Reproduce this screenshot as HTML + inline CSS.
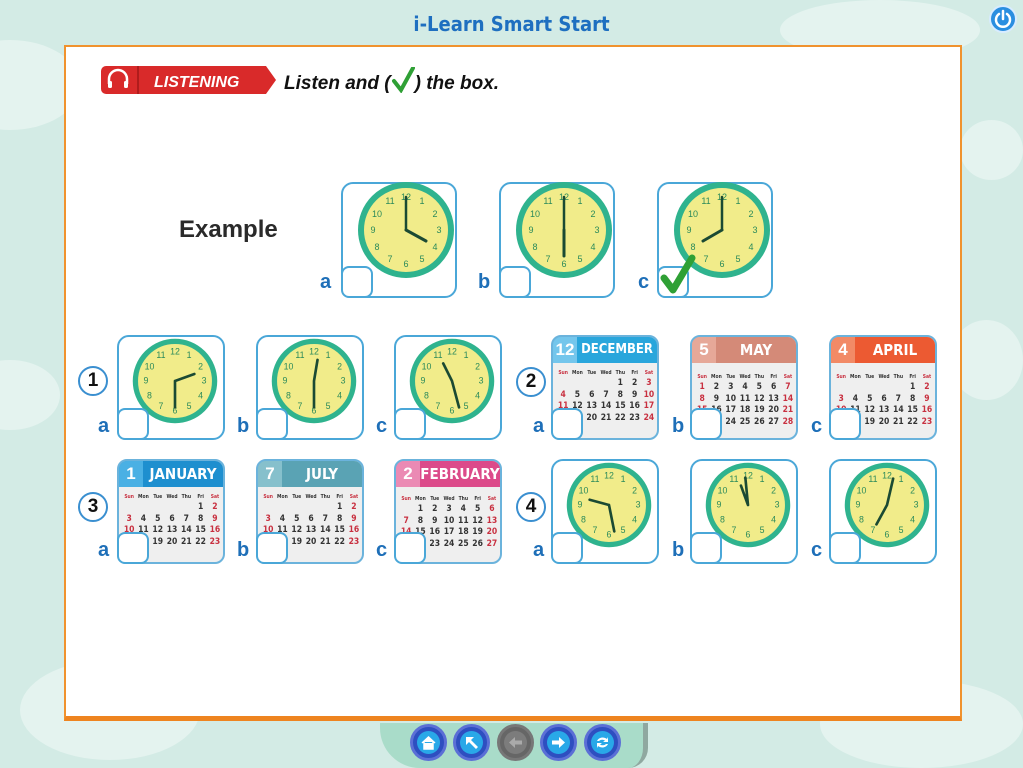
<!DOCTYPE html>
<html><head><meta charset="utf-8"><style>
*{margin:0;padding:0;box-sizing:border-box}
html,body{width:1023px;height:768px;overflow:hidden}
body{background:#d3ebe5;font-family:"Liberation Sans",sans-serif;position:relative}
.wrap{position:absolute;left:0;top:0;width:1023px;height:768px;overflow:hidden}
.cloud{position:absolute;background:#e4f3ef;border-radius:50%}
.title{position:absolute;top:12px;left:0;width:1023px;text-align:center;color:#1e6fc0;font-weight:bold;font-size:20px;font-family:"DejaVu Sans Condensed","Liberation Sans",sans-serif}
.power{position:absolute;left:989px;top:5px;width:28px;height:28px;border-radius:50%;background:#2a8ee0;border:2px solid #d8ecff}
.panel{position:absolute;left:64px;top:45px;width:898px;height:676px;background:#fff;border:2px solid #f0922e;border-bottom:5px solid #ee8420}
.box{position:absolute;border:2px solid #4aa7d8;border-radius:12px;background:#fff}
.cb{position:absolute;width:32px;height:32px;border:2px solid #4aa7d8;border-radius:8px;background:#fff}
.lab{position:absolute;font-weight:bold;color:#1e6fb8;font-size:20px}
.num{position:absolute;width:30px;height:30px;border:2px solid #3a8fd0;border-radius:50%;text-align:center;font-weight:bold;font-size:19px;line-height:26px;color:#111}
.cal{position:absolute;width:108px;height:105px;border:2px solid #6bb3dc;border-radius:10px;overflow:hidden;background:#efefef}
.ch{height:26px;display:flex;color:#fff;font-weight:bold;font-size:17px;line-height:26px;white-space:nowrap}
.ch b{width:24px;text-align:center;flex:none}
.ch span{flex:1;text-align:center;font-family:"DejaVu Sans Condensed","Liberation Sans",sans-serif;font-size:15px;overflow:hidden}
.cg{font-weight:bold;color:#333;padding:5px 3px 0;display:grid;grid-template-columns:repeat(7,14.3px);font-size:8.5px;line-height:11.5px;text-align:center;font-family:"DejaVu Sans Condensed","Liberation Sans",sans-serif}
.cg .h{font-size:5px;line-height:10px}
.cg .d{color:#c83040}
.nb{position:absolute;top:724px;width:37px;height:37px;border-radius:50%;background:#2e4fc0;border:3px solid #5b6fd6}
.nb i{position:absolute;left:4px;top:4px;width:23px;height:23px;border-radius:50%;background:#29a8e8}
</style></head><body><div class="wrap">
<div class="cloud" style="left:-60px;top:40px;width:140px;height:90px"></div>
<div class="cloud" style="left:-40px;top:360px;width:100px;height:70px"></div>
<div class="cloud" style="left:20px;top:660px;width:180px;height:100px"></div>
<div class="cloud" style="left:960px;top:120px;width:63px;height:60px"></div>
<div class="cloud" style="left:950px;top:320px;width:73px;height:80px"></div>
<div class="cloud" style="left:820px;top:680px;width:203px;height:88px"></div>
<div class="cloud" style="left:780px;top:0;width:200px;height:60px"></div>
<div class="title">i-Learn Smart Start</div>
<div class="power"><svg width="24" height="24" viewBox="0 0 24 24"><path d="M8 7a7 7 0 1 0 8 0" fill="none" stroke="#fff" stroke-width="2.5" stroke-linecap="round"/><path d="M12 4v8" stroke="#fff" stroke-width="2.5" stroke-linecap="round"/></svg></div>

<div class="panel"></div>
<svg style="position:absolute;left:100px;top:64px" width="180" height="34"><path d="M6 2h160l10 14-10 14H6a5 5 0 0 1-5-5V7a5 5 0 0 1 5-5z" fill="#d92a2a"/><path d="M38 2v28" stroke="#b01c1c" stroke-width="2"/><path d="M9 20v-5a9 9 0 0 1 18 0v5" fill="none" stroke="#fff" stroke-width="2.5"/><rect x="8" y="17" width="4" height="7" rx="1.5" fill="#fff"/><rect x="24" y="17" width="4" height="7" rx="1.5" fill="#fff"/><text x="54" y="23" fill="#fff" font-family="Liberation Sans" font-weight="bold" font-style="italic" font-size="16">LISTENING</text></svg>
<div style="position:absolute;left:284px;top:67px;font-size:19px;font-weight:bold;font-style:italic;color:#111;white-space:nowrap">Listen and (<svg width="24" height="26" style="vertical-align:-4px" viewBox="0 0 24 26"><path d="M3 14l7 9L22 1" fill="none" stroke="#2fa035" stroke-width="4" stroke-linecap="round"/></svg>) the box.</div>

<div style="position:absolute;left:179px;top:216px;font-size:24px;font-weight:bold;color:#2a2a2a">Example</div>

<div class="box" style="left:341px;top:182px;width:116px;height:116px"></div>
<div class="box" style="left:499px;top:182px;width:116px;height:116px"></div>
<div class="box" style="left:657px;top:182px;width:116px;height:116px"></div>

<div class="box" style="left:117px;top:335px;width:108px;height:105px"></div>
<div class="box" style="left:256px;top:335px;width:108px;height:105px"></div>
<div class="box" style="left:394px;top:335px;width:108px;height:105px"></div>
<div class="box" style="left:551px;top:459px;width:108px;height:105px"></div>
<div class="box" style="left:690px;top:459px;width:108px;height:105px"></div>
<div class="box" style="left:829px;top:459px;width:108px;height:105px"></div>

<svg width="0" height="0" style="position:absolute"><defs>
<g id="face"><circle cx="50" cy="50" r="45" fill="#f1ec8a" stroke="#2fb38e" stroke-width="6"/></g>
</defs></svg>
<svg style="position:absolute;left:356px;top:180px" width="100" height="100" viewBox="0 0 100 100"><use href="#face"/><g font-size="9" fill="#2a8a5a" text-anchor="middle" font-family="Liberation Sans"><text x="50" y="20">12</text><text x="66" y="24">1</text><text x="79" y="37">2</text><text x="83" y="53">3</text><text x="79" y="70">4</text><text x="66" y="82">5</text><text x="50" y="87">6</text><text x="34" y="82">7</text><text x="21" y="70">8</text><text x="17" y="53">9</text><text x="21" y="37">10</text><text x="34" y="24">11</text></g><path d="M50 50L50 17" stroke="#1b4a33" stroke-width="2.5" stroke-linecap="round"/><path d="M50 50L70 61" stroke="#1b4a33" stroke-width="3" stroke-linecap="round"/></svg>
<svg style="position:absolute;left:514px;top:180px" width="100" height="100" viewBox="0 0 100 100"><use href="#face"/><g font-size="9" fill="#2a8a5a" text-anchor="middle" font-family="Liberation Sans"><text x="50" y="20">12</text><text x="66" y="24">1</text><text x="79" y="37">2</text><text x="83" y="53">3</text><text x="79" y="70">4</text><text x="66" y="82">5</text><text x="50" y="87">6</text><text x="34" y="82">7</text><text x="21" y="70">8</text><text x="17" y="53">9</text><text x="21" y="37">10</text><text x="34" y="24">11</text></g><path d="M50 50L50 17" stroke="#1b4a33" stroke-width="2.5" stroke-linecap="round"/><path d="M50 50L50 76" stroke="#1b4a33" stroke-width="3" stroke-linecap="round"/></svg>
<svg style="position:absolute;left:672px;top:180px" width="100" height="100" viewBox="0 0 100 100"><use href="#face"/><g font-size="9" fill="#2a8a5a" text-anchor="middle" font-family="Liberation Sans"><text x="50" y="20">12</text><text x="66" y="24">1</text><text x="79" y="37">2</text><text x="83" y="53">3</text><text x="79" y="70">4</text><text x="66" y="82">5</text><text x="50" y="87">6</text><text x="34" y="82">7</text><text x="21" y="70">8</text><text x="17" y="53">9</text><text x="21" y="37">10</text><text x="34" y="24">11</text></g><path d="M50 50L50 17" stroke="#1b4a33" stroke-width="2.5" stroke-linecap="round"/><path d="M50 50L31 61" stroke="#1b4a33" stroke-width="3" stroke-linecap="round"/></svg>

<svg style="position:absolute;left:131px;top:337px" width="88" height="88" viewBox="0 0 100 100"><use href="#face"/><g font-size="10" fill="#2a8a5a" text-anchor="middle" font-family="Liberation Sans"><text x="50" y="20">12</text><text x="66" y="24">1</text><text x="79" y="37">2</text><text x="83" y="53">3</text><text x="79" y="70">4</text><text x="66" y="82">5</text><text x="50" y="87">6</text><text x="34" y="82">7</text><text x="21" y="70">8</text><text x="17" y="53">9</text><text x="21" y="37">10</text><text x="34" y="24">11</text></g><path d="M50 50L50 80M50 50L72 42" stroke="#1b4a33" stroke-width="3" stroke-linecap="round"/></svg>
<svg style="position:absolute;left:270px;top:337px" width="88" height="88" viewBox="0 0 100 100"><use href="#face"/><g font-size="10" fill="#2a8a5a" text-anchor="middle" font-family="Liberation Sans"><text x="50" y="20">12</text><text x="66" y="24">1</text><text x="79" y="37">2</text><text x="83" y="53">3</text><text x="79" y="70">4</text><text x="66" y="82">5</text><text x="50" y="87">6</text><text x="34" y="82">7</text><text x="21" y="70">8</text><text x="17" y="53">9</text><text x="21" y="37">10</text><text x="34" y="24">11</text></g><path d="M50 50L50 80M50 50L54 26" stroke="#1b4a33" stroke-width="3" stroke-linecap="round"/></svg>
<svg style="position:absolute;left:408px;top:337px" width="88" height="88" viewBox="0 0 100 100"><use href="#face"/><g font-size="10" fill="#2a8a5a" text-anchor="middle" font-family="Liberation Sans"><text x="50" y="20">12</text><text x="66" y="24">1</text><text x="79" y="37">2</text><text x="83" y="53">3</text><text x="79" y="70">4</text><text x="66" y="82">5</text><text x="50" y="87">6</text><text x="34" y="82">7</text><text x="21" y="70">8</text><text x="17" y="53">9</text><text x="21" y="37">10</text><text x="34" y="24">11</text></g><path d="M50 50L58 80M50 50L40 30" stroke="#1b4a33" stroke-width="3" stroke-linecap="round"/></svg>

<svg style="position:absolute;left:565px;top:461px" width="88" height="88" viewBox="0 0 100 100"><use href="#face"/><g font-size="10" fill="#2a8a5a" text-anchor="middle" font-family="Liberation Sans"><text x="50" y="20">12</text><text x="66" y="24">1</text><text x="79" y="37">2</text><text x="83" y="53">3</text><text x="79" y="70">4</text><text x="66" y="82">5</text><text x="50" y="87">6</text><text x="34" y="82">7</text><text x="21" y="70">8</text><text x="17" y="53">9</text><text x="21" y="37">10</text><text x="34" y="24">11</text></g><path d="M50 50L28 44M50 50L56 80" stroke="#1b4a33" stroke-width="3" stroke-linecap="round"/></svg>
<svg style="position:absolute;left:704px;top:461px" width="88" height="88" viewBox="0 0 100 100"><use href="#face"/><g font-size="10" fill="#2a8a5a" text-anchor="middle" font-family="Liberation Sans"><text x="50" y="20">12</text><text x="66" y="24">1</text><text x="79" y="37">2</text><text x="83" y="53">3</text><text x="79" y="70">4</text><text x="66" y="82">5</text><text x="50" y="87">6</text><text x="34" y="82">7</text><text x="21" y="70">8</text><text x="17" y="53">9</text><text x="21" y="37">10</text><text x="34" y="24">11</text></g><path d="M50 50L42 28M50 50L47 19" stroke="#1b4a33" stroke-width="3" stroke-linecap="round"/></svg>
<svg style="position:absolute;left:843px;top:461px" width="88" height="88" viewBox="0 0 100 100"><use href="#face"/><g font-size="10" fill="#2a8a5a" text-anchor="middle" font-family="Liberation Sans"><text x="50" y="20">12</text><text x="66" y="24">1</text><text x="79" y="37">2</text><text x="83" y="53">3</text><text x="79" y="70">4</text><text x="66" y="82">5</text><text x="50" y="87">6</text><text x="34" y="82">7</text><text x="21" y="70">8</text><text x="17" y="53">9</text><text x="21" y="37">10</text><text x="34" y="24">11</text></g><path d="M50 50L38 72M50 50L57 20" stroke="#1b4a33" stroke-width="3" stroke-linecap="round"/></svg>

<div class="cal" style="left:551px;top:335px"><div class="ch" style="background:#29a6dc"><b style="background:#74c6ec">12</b><span style="font-size:13px">DECEMBER</span></div><div class="cg"><span class="h d">Sun</span><span class="h">Mon</span><span class="h">Tue</span><span class="h">Wed</span><span class="h">Thu</span><span class="h">Fri</span><span class="h d">Sat</span><span></span><span></span><span></span><span></span><span>1</span><span>2</span><span class="d">3</span><span class="d">4</span><span>5</span><span>6</span><span>7</span><span>8</span><span>9</span><span class="d">10</span><span class="d">11</span><span>12</span><span>13</span><span>14</span><span>15</span><span>16</span><span class="d">17</span><span class="d">18</span><span>19</span><span>20</span><span>21</span><span>22</span><span>23</span><span class="d">24</span></div></div>
<div class="cal" style="left:690px;top:335px"><div class="ch" style="background:#d48a78"><b style="background:#e6a898">5</b><span>MAY</span></div><div class="cg" style="padding-top:9px"><span class="h d">Sun</span><span class="h">Mon</span><span class="h">Tue</span><span class="h">Wed</span><span class="h">Thu</span><span class="h">Fri</span><span class="h d">Sat</span><span class="d">1</span><span>2</span><span>3</span><span>4</span><span>5</span><span>6</span><span class="d">7</span><span class="d">8</span><span>9</span><span>10</span><span>11</span><span>12</span><span>13</span><span class="d">14</span><span class="d">15</span><span>16</span><span>17</span><span>18</span><span>19</span><span>20</span><span class="d">21</span><span class="d">22</span><span>23</span><span>24</span><span>25</span><span>26</span><span>27</span><span class="d">28</span></div></div>
<div class="cal" style="left:829px;top:335px"><div class="ch" style="background:#ec5a32"><b style="background:#f28a66">4</b><span>APRIL</span></div><div class="cg" style="padding-top:9px"><span class="h d">Sun</span><span class="h">Mon</span><span class="h">Tue</span><span class="h">Wed</span><span class="h">Thu</span><span class="h">Fri</span><span class="h d">Sat</span><span></span><span></span><span></span><span></span><span></span><span>1</span><span class="d">2</span><span class="d">3</span><span>4</span><span>5</span><span>6</span><span>7</span><span>8</span><span class="d">9</span><span class="d">10</span><span>11</span><span>12</span><span>13</span><span>14</span><span>15</span><span class="d">16</span><span class="d">17</span><span>18</span><span>19</span><span>20</span><span>21</span><span>22</span><span class="d">23</span></div></div>
<div class="cal" style="left:117px;top:459px"><div class="ch" style="background:#1e8fcf"><b style="background:#4ab0e4">1</b><span>JANUARY</span></div><div class="cg"><span class="h d">Sun</span><span class="h">Mon</span><span class="h">Tue</span><span class="h">Wed</span><span class="h">Thu</span><span class="h">Fri</span><span class="h d">Sat</span><span></span><span></span><span></span><span></span><span></span><span>1</span><span class="d">2</span><span class="d">3</span><span>4</span><span>5</span><span>6</span><span>7</span><span>8</span><span class="d">9</span><span class="d">10</span><span>11</span><span>12</span><span>13</span><span>14</span><span>15</span><span class="d">16</span><span class="d">17</span><span>18</span><span>19</span><span>20</span><span>21</span><span>22</span><span class="d">23</span></div></div>
<div class="cal" style="left:256px;top:459px"><div class="ch" style="background:#5aa3b4"><b style="background:#86c0cc">7</b><span>JULY</span></div><div class="cg"><span class="h d">Sun</span><span class="h">Mon</span><span class="h">Tue</span><span class="h">Wed</span><span class="h">Thu</span><span class="h">Fri</span><span class="h d">Sat</span><span></span><span></span><span></span><span></span><span></span><span>1</span><span class="d">2</span><span class="d">3</span><span>4</span><span>5</span><span>6</span><span>7</span><span>8</span><span class="d">9</span><span class="d">10</span><span>11</span><span>12</span><span>13</span><span>14</span><span>15</span><span class="d">16</span><span class="d">17</span><span>18</span><span>19</span><span>20</span><span>21</span><span>22</span><span class="d">23</span></div></div>
<div class="cal" style="left:394px;top:459px"><div class="ch" style="background:#dc4a8a"><b style="background:#eb8ab4">2</b><span>FEBRUARY</span></div><div class="cg" style="padding-top:7px"><span class="h d">Sun</span><span class="h">Mon</span><span class="h">Tue</span><span class="h">Wed</span><span class="h">Thu</span><span class="h">Fri</span><span class="h d">Sat</span><span></span><span>1</span><span>2</span><span>3</span><span>4</span><span>5</span><span class="d">6</span><span class="d">7</span><span>8</span><span>9</span><span>10</span><span>11</span><span>12</span><span class="d">13</span><span class="d">14</span><span>15</span><span>16</span><span>17</span><span>18</span><span>19</span><span class="d">20</span><span class="d">21</span><span>22</span><span>23</span><span>24</span><span>25</span><span>26</span><span class="d">27</span></div></div>

<div class="cb" style="left:341px;top:266px"></div>
<div class="cb" style="left:499px;top:266px"></div>
<div class="cb" style="left:657px;top:266px"></div>
<svg style="position:absolute;left:658px;top:252px" width="40" height="44"><path d="M6 26l9 12L34 6" fill="none" stroke="#2fa035" stroke-width="7" stroke-linecap="round" stroke-linejoin="round"/></svg>
<div class="cb" style="left:117px;top:408px"></div><div class="cb" style="left:256px;top:408px"></div><div class="cb" style="left:394px;top:408px"></div>
<div class="cb" style="left:551px;top:408px"></div><div class="cb" style="left:690px;top:408px"></div><div class="cb" style="left:829px;top:408px"></div>
<div class="cb" style="left:117px;top:532px"></div><div class="cb" style="left:256px;top:532px"></div><div class="cb" style="left:394px;top:532px"></div>
<div class="cb" style="left:551px;top:532px"></div><div class="cb" style="left:690px;top:532px"></div><div class="cb" style="left:829px;top:532px"></div>

<div class="lab" style="left:320px;top:271px">a</div><div class="lab" style="left:478px;top:271px">b</div><div class="lab" style="left:638px;top:271px">c</div>
<div class="lab" style="left:98px;top:415px">a</div><div class="lab" style="left:237px;top:415px">b</div><div class="lab" style="left:376px;top:415px">c</div>
<div class="lab" style="left:533px;top:415px">a</div><div class="lab" style="left:672px;top:415px">b</div><div class="lab" style="left:811px;top:415px">c</div>
<div class="lab" style="left:98px;top:539px">a</div><div class="lab" style="left:237px;top:539px">b</div><div class="lab" style="left:376px;top:539px">c</div>
<div class="lab" style="left:533px;top:539px">a</div><div class="lab" style="left:672px;top:539px">b</div><div class="lab" style="left:811px;top:539px">c</div>
<div class="num" style="left:78px;top:366px">1</div><div class="num" style="left:516px;top:367px">2</div>
<div class="num" style="left:78px;top:492px">3</div><div class="num" style="left:516px;top:492px">4</div>

<div style="position:absolute;left:380px;top:723px;width:268px;height:45px;background:#a9dcc9;border-radius:0 0 20px 40px;border-right:5px solid #8fa8a0"></div>
<div class="nb" style="left:410px"><i></i><svg style="position:absolute;left:7px;top:7px" width="17" height="17"><path d="M2 9l6.5-6 6.5 6M4 8v7h9V8" fill="#fff" stroke="#fff" stroke-width="1.5"/></svg></div>
<div class="nb" style="left:453px"><i></i><svg style="position:absolute;left:7px;top:7px" width="17" height="17"><path d="M3 3h8L8 6l7 7-2 2-7-7-3 3z" fill="#fff"/></svg></div>
<div class="nb" style="left:497px;background:#666;border-color:#777"><i style="background:#7c7c7c"></i><svg style="position:absolute;left:7px;top:7px" width="17" height="17"><path d="M2 8.5L8 3v3.5h7v4H8V14z" fill="#aaa"/></svg></div>
<div class="nb" style="left:540px"><i></i><svg style="position:absolute;left:7px;top:7px" width="17" height="17"><path d="M15 8.5L9 3v3.5H2v4h7V14z" fill="#fff"/></svg></div>
<div class="nb" style="left:584px"><i></i><svg style="position:absolute;left:7px;top:7px" width="17" height="17"><path d="M3 7a6 5 0 0 1 10-2l1-2v5h-5l2-1.5A4 3 0 0 0 5 7zM14 10a6 5 0 0 1-10 2l-1 2V9h5l-2 1.5A4 3 0 0 0 12 10z" fill="#fff"/></svg></div>
</div></body></html>
